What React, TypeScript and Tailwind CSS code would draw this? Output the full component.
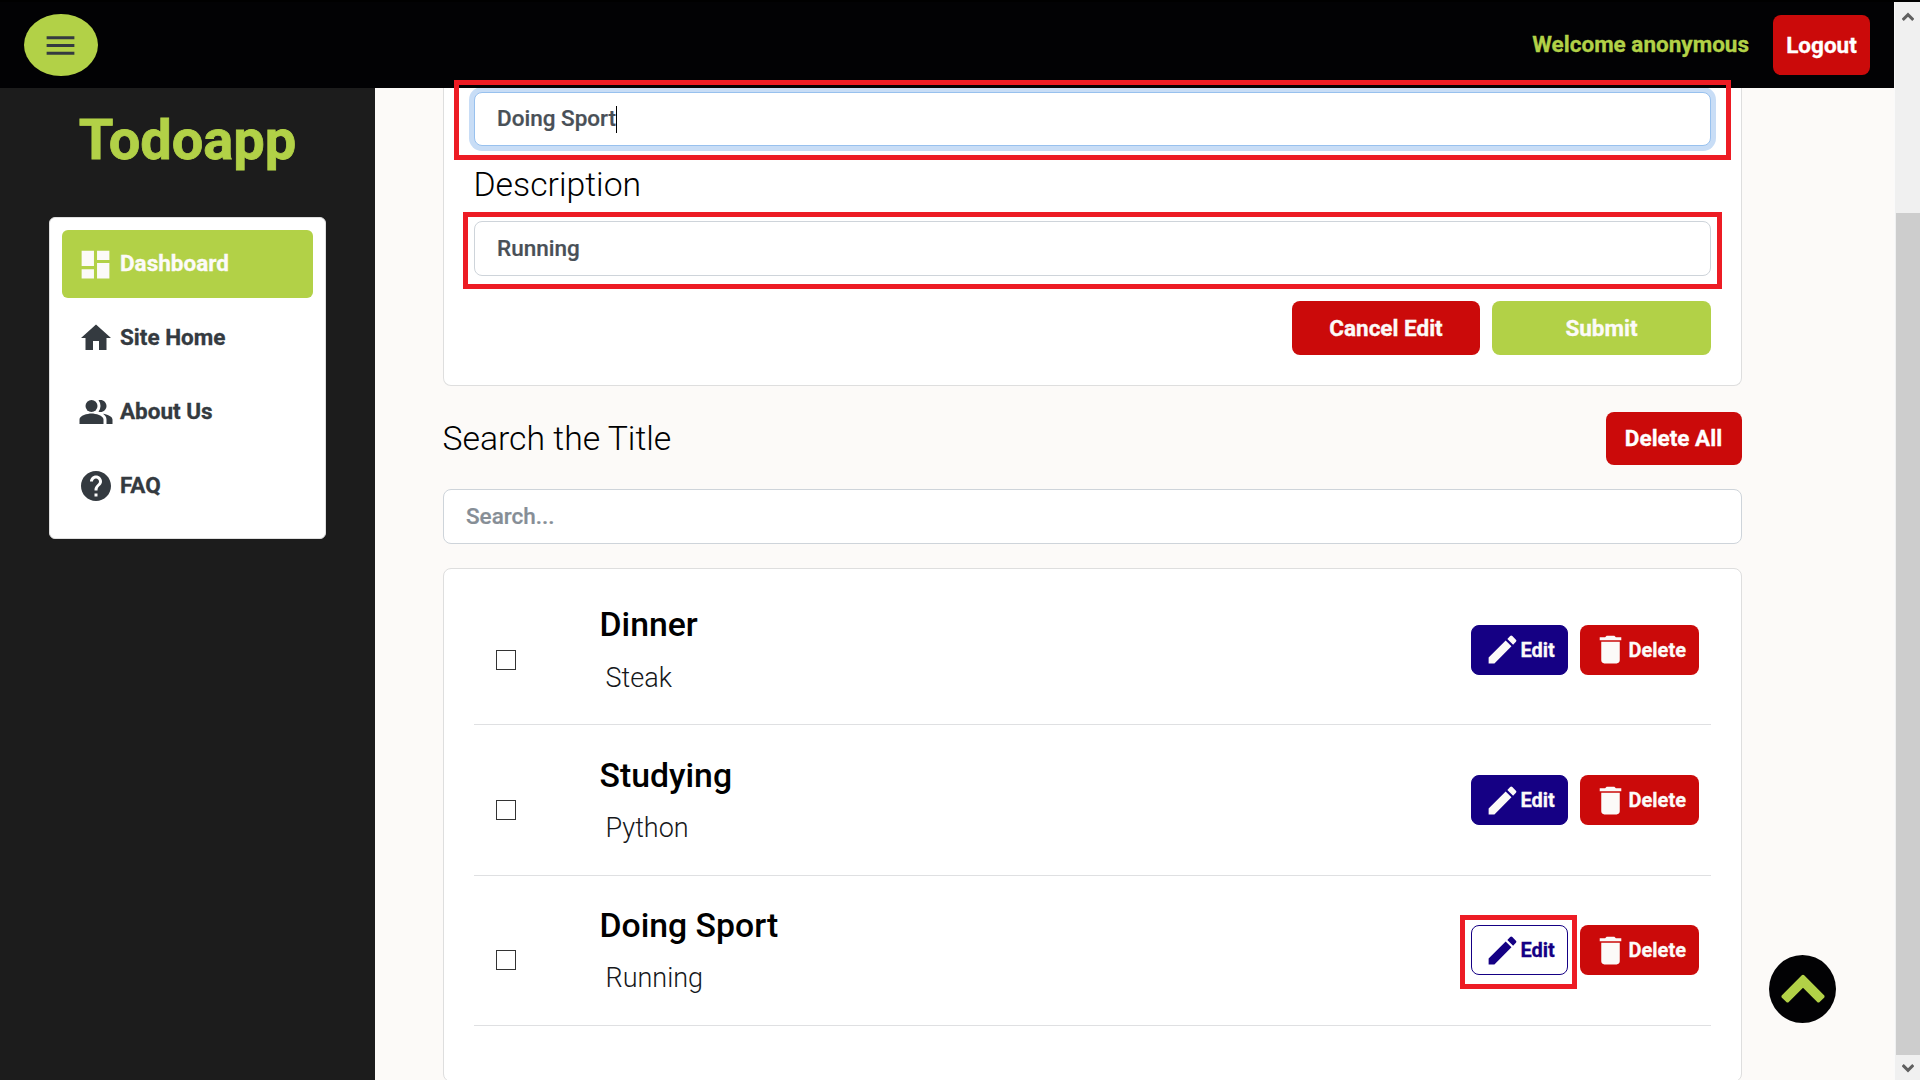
import React from "react";
import { MdDashboard, MdDelete, MdEdit, MdHelp, MdHome, MdMenu, MdPeopleAlt } from "react-icons/md";

const navItems = [
  { label: "Dashboard", icon: MdDashboard, size: 37, active: true },
  { label: "Site Home", icon: MdHome, size: 36, active: false },
  { label: "About Us", icon: MdPeopleAlt, size: 36, active: false },
  { label: "FAQ", icon: MdHelp, size: 36, active: false },
];

const todos = [
  { title: "Dinner", note: "Steak", editing: false },
  { title: "Studying", note: "Python", editing: false },
  { title: "Doing Sport", note: "Running", editing: true },
];

function Header() {
  return (
    <header className="flex h-[86px] shrink-0 items-start bg-[#020204] pl-6 pr-[24px]">
      <button className="mt-3 flex h-[62px] w-[74px] items-center justify-center rounded-[50%] bg-[#b2d147] pr-px text-[#343a40]">
        <MdMenu size={37} />
      </button>
      <span className="ml-auto mt-[25px] whitespace-nowrap text-[22.5px] font-bold leading-[34px] text-[#b2d147] [-webkit-text-stroke:0.014em]">
        Welcome anonymous
      </span>
      <button className="ml-6 mt-[13px] h-[60px] w-[97px] rounded-lg bg-[#cb0a0a] pt-0.5 text-[22.5px] font-bold text-white [-webkit-text-stroke:0.014em]">
        Logout
      </button>
    </header>
  );
}

function Sidebar() {
  return (
    <aside className="w-[375px] shrink-0 bg-[#1c1c1c]">
      <h1 className="mt-5 text-center text-[56px] font-bold leading-[64px] text-[#b2d147] [-webkit-text-stroke:0.014em]">Todoapp</h1>
      <nav className="ml-[49px] mt-[45px] flex h-[322px] w-[277px] flex-col gap-1.5 rounded-md border border-[#dfdfdf] bg-white px-3 pt-3">
        {navItems.map(({ label, icon: Icon, size, active }) => (
          <a
            key={label}
            className={
              active
                ? "flex h-[68px] items-center rounded-md bg-[#b2d147] pl-[13px] text-[#fcfaf8]"
                : "flex h-[68px] items-center rounded-md pl-[13px] text-[#343a40]"
            }
          >
            <span className="flex w-[41px] justify-center">
              <Icon size={size} />
            </span>
            <span className="mb-px ml-1 text-[22.5px] font-bold [-webkit-text-stroke:0.014em]">{label}</span>
          </a>
        ))}
      </nav>
    </aside>
  );
}

function EditForm() {
  return (
    <section className="h-[298px] rounded-b-lg border border-t-0 border-[#dedede] bg-white px-[30px] pt-1">
      <div className="flex h-[54px] items-center rounded-lg border border-[#98c1ee] bg-white pl-[22px] text-[22.5px] font-medium text-[#495057] ring-[5px] ring-[#c8ddf6] [-webkit-text-stroke:0.01em]">
        <span>Doing Sport</span>
        <span className="h-[27px] w-px bg-black" />
      </div>
      <h2 className="-ml-[0.5px] mt-[18px] h-[57px] text-[33.75px] font-light leading-[42px] text-black">Description</h2>
      <div className="flex h-[55px] items-center rounded-lg border border-[#ced4da] bg-white pl-[22px] text-[22.5px] font-medium text-[#495057] [-webkit-text-stroke:0.01em]">
        <span>Running</span>
      </div>
      <div className="mt-[25px] flex justify-end gap-3 text-[22.5px] font-bold text-[#fcfaf8] [-webkit-text-stroke:0.014em]">
        <button className="h-[54px] w-[188px] rounded-lg bg-[#cb0a0a] pt-px">Cancel Edit</button>
        <button className="h-[54px] w-[219px] rounded-lg bg-[#b2d147] pt-px">Submit</button>
      </div>
    </section>
  );
}

function TodoRow({ title, note, editing }: { title: string; note: string; editing: boolean }) {
  return (
    <li className="flex h-[150.3px] items-start border-b border-[#dfe0e2]">
      <span className="ml-[22px] mt-[74.7px] size-5 border border-[#333] bg-white" />
      <div className="ml-[83.500px] mt-[29.3px]">
        <h3 className="text-[33.75px] font-medium leading-[42px] text-black">{title}</h3>
        <p className="ml-[6px] mt-[15.500px] text-[27px] font-light leading-8 text-[#16181b]">{note}</p>
      </div>
      <div className="ml-auto mr-3 mt-[49.8px] flex gap-3 text-[20px] font-bold [-webkit-text-stroke:0.014em]">
        <button
          className={
            editing
              ? "flex h-[50px] w-[97px] items-center rounded-lg border border-[#150084] bg-white pl-3 text-[#150084]"
              : "flex h-[50px] w-[97px] items-center rounded-lg border border-[#150084] bg-[#150084] pl-3 text-[#fcfaf8]"
          }
        >
          <MdEdit size={37} />
          <span className="-ml-[0.5px]">Edit</span>
        </button>
        <button className="flex h-[50px] w-[119px] items-center rounded-lg bg-[#cb0a0a] pl-3 text-[#fcfaf8]">
          <MdDelete size={37} />
          <span className="-ml-[0.5px]">Delete</span>
        </button>
      </div>
    </li>
  );
}

function Scrollbar() {
  return (
    <div className="flex w-[26px] shrink-0 flex-col items-center border-l border-[#fafafa] bg-[#f0f0f0]">
      <svg className="mt-2.5 shrink-0" width="12" height="10" viewBox="0 0 12 10" fill="none" stroke="#606060" strokeWidth="3">
        <path d="M0.7 8 L6 2.7 L11.3 8" />
      </svg>
      <div className="mt-[191px] h-[842px] w-6 bg-[#cdcdcd]" />
      <svg className="mt-2 shrink-0" width="12" height="10" viewBox="0 0 12 10" fill="none" stroke="#606060" strokeWidth="3">
        <path d="M0.7 2 L6 7.3 L11.3 2" />
      </svg>
    </div>
  );
}

export default function App() {
  return (
    <div className="relative flex h-[1080px] w-[1920px] overflow-hidden border-t-2 border-black bg-[#fcfaf8] font-['Roboto',sans-serif]">
      <div className="flex min-w-0 flex-1 flex-col">
        <Header />
        <div className="flex min-h-0 flex-1">
          <Sidebar />
          <main className="flex-1 overflow-hidden pl-[68px] pr-[152px]">
            <EditForm />
            <div className="mt-[26px] flex h-[53px] items-center justify-between">
              <h2 className="-ml-[0.5px] text-[33.75px] font-light leading-[42px] text-black">Search the Title</h2>
              <button className="h-[53px] w-[136px] rounded-lg bg-[#cb0a0a] pr-px text-[22.5px] font-bold text-white [-webkit-text-stroke:0.014em]">
                Delete All
              </button>
            </div>
            <div className="mt-6 flex h-[55px] items-center rounded-lg border border-[#ced4da] bg-white pl-[22px] text-[22.5px] font-medium text-[#868e96] [-webkit-text-stroke:0.01em]">
              <span>Search...</span>
            </div>
            <section className="mt-6 h-[514px] rounded-lg border border-[#dedede] bg-white px-[30px] pt-1.5">
              <ul>
                {todos.map((todo) => (
                  <TodoRow key={todo.title} {...todo} />
                ))}
              </ul>
            </section>
          </main>
        </div>
      </div>
      <Scrollbar />

      <div className="absolute left-[454px] top-[78px] h-20 w-[1277px] border-5 border-[#ed1c24]" />
      <div className="absolute left-[463px] top-[210px] h-[77px] w-[1259px] border-5 border-[#ed1c24]" />
      <div className="absolute left-[1460px] top-[913px] h-[74px] w-[117px] border-5 border-[#ed1c24]" />

      <button className="absolute left-[1769px] top-[953px] h-[68px] w-[67px] rounded-[50%] bg-[#020204] pl-[9.500px] text-[#b2d147]">
        <svg width="48" height="48" viewBox="0 0 1792 1792" fill="currentColor" className="-mt-1.5">
          <path d="M1683 1331l-166 165q-19 19-45 19t-45-19l-531-531-531 531q-19 19-45 19t-45-19l-166-165q-19-19-19-45.500t19-45.500l742-741q19-19 45-19t45 19l742 741q19 19 19 45.500t-19 45.500z" />
        </svg>
      </button>
    </div>
  );
}
